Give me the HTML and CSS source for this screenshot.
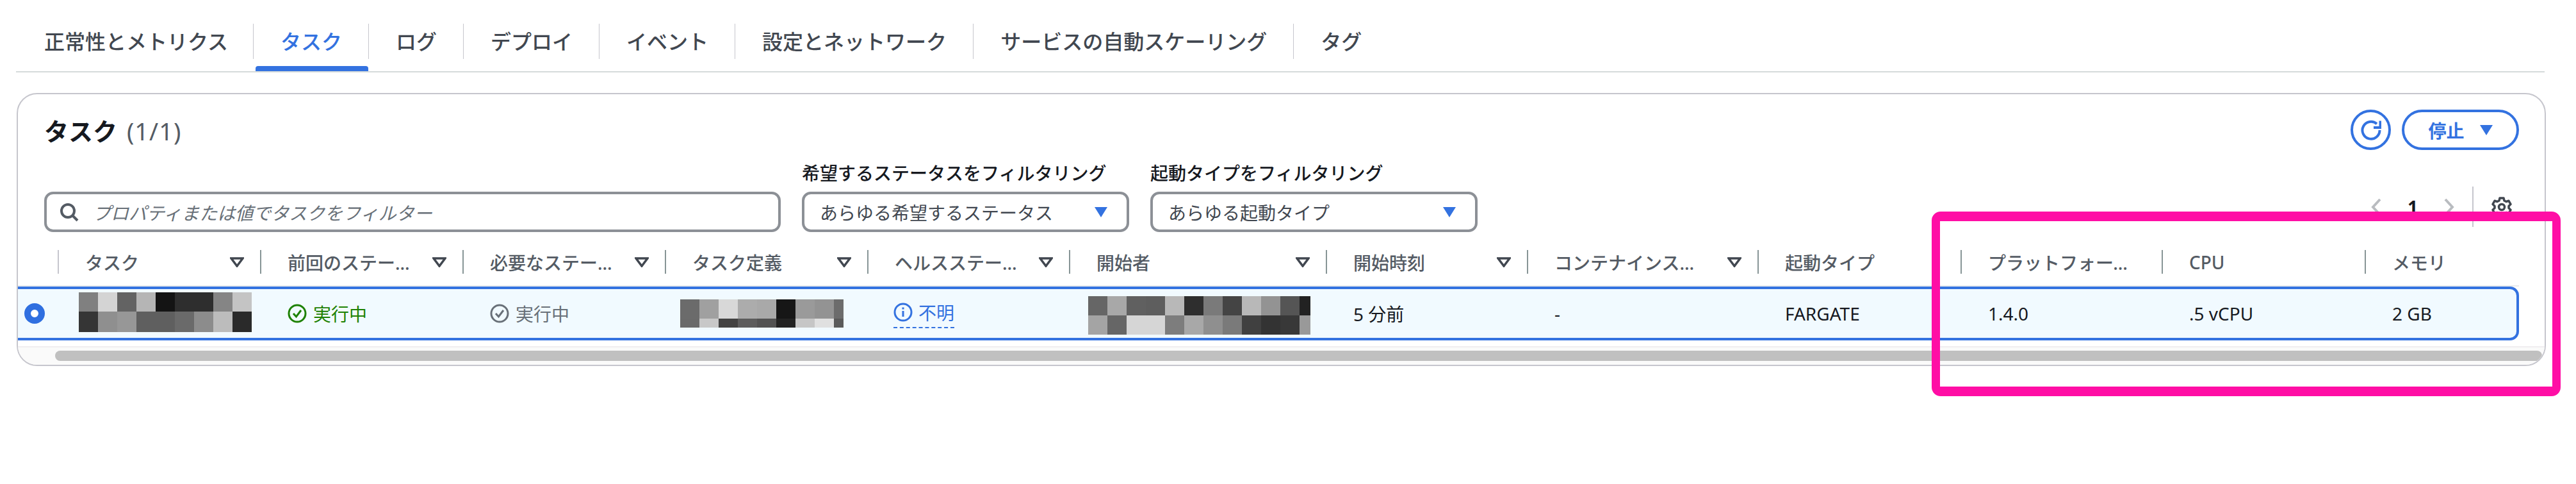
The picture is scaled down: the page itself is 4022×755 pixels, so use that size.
FILE: index.html
```html
<!DOCTYPE html>
<html lang="ja">
<head>
    <meta charset="UTF-8">
    <title>タスク</title>
    <link rel="stylesheet" href="styles.css">
</head>
<body>

    <nav class="tabs">
        <a class="tab">正常性とメトリクス</a>
        <a class="tab tab-active">タスク</a>
        <a class="tab">ログ</a>
        <a class="tab">デプロイ</a>
        <a class="tab">イベント</a>
        <a class="tab">設定とネットワーク</a>
        <a class="tab">サービスの自動スケーリング</a>
        <a class="tab">タグ</a>
    </nav>

    <section class="card">

        <div class="card-head">
            <h2 class="card-title">タスク <span class="count">(1/1)</span></h2>
            <div class="actions">
                <button class="btn-round">
                    <svg width="32" height="32" viewBox="0 0 32 32" fill="none" stroke="#3372e0" stroke-width="4"><path d="M25 6.2A13.5 13.5 0 1 0 29.5 16"/><path d="M30.5 1.5V12H20"/></svg>
                </button>
                <button class="btn-stop">停止 <svg class="caret" viewBox="0 0 20 16"><path d="M0 0H20L10 16Z"/></svg></button>
            </div>
        </div>

        <div class="filters">
            <div class="search">
                <svg width="30" height="30" viewBox="0 0 30 30" fill="none" stroke="#545b64" stroke-width="4"><circle cx="13" cy="13" r="10"/><path d="M20 20l8 8"/></svg>
                <span class="placeholder">プロパティまたは値でタスクをフィルター</span>
            </div>
            <div class="field">
                <label>希望するステータスをフィルタリング</label>
                <div class="select">あらゆる希望するステータス <svg class="caret" viewBox="0 0 20 16"><path d="M0 0H20L10 16Z"/></svg></div>
            </div>
            <div class="field">
                <label>起動タイプをフィルタリング</label>
                <div class="select">あらゆる起動タイプ <svg class="caret" viewBox="0 0 20 16"><path d="M0 0H20L10 16Z"/></svg></div>
            </div>
            <div class="pager">
                <svg width="16" height="28" viewBox="0 0 16 28" fill="none" stroke="#b9bcc0" stroke-width="4"><path d="M14 2L3 14l11 12"/></svg>
                <span class="page-num">1</span>
                <svg width="16" height="28" viewBox="0 0 16 28" fill="none" stroke="#b9bcc0" stroke-width="4"><path d="M2 2l11 12L2 26"/></svg>
                <span class="pager-line"></span>
                <svg width="32" height="32" viewBox="0 0 32 32" fill="none" stroke="#414750" stroke-width="3.5" stroke-linejoin="round"><path d="M13 2h6l1 4 3 1.5 4-1.2 3 5.2-3 2.9v3.2l3 2.9-3 5.2-4-1.2-3 1.5-1 4h-6l-1-4-3-1.5-4 1.2-3-5.2 3-2.9v-3.2l-3-2.9 3-5.2 4 1.2 3-1.5z"/><circle cx="16" cy="16" r="4.5"/></svg>
            </div>
        </div>

        <div class="cols thead">
            <div></div>
            <div class="th th-first"><span class="th-label">タスク</span><svg class="sort" viewBox="0 0 22 16"><path d="M2 2H20L11 14Z"/></svg></div>
            <div class="th"><span class="th-label">前回のステータス</span><svg class="sort" viewBox="0 0 22 16"><path d="M2 2H20L11 14Z"/></svg></div>
            <div class="th"><span class="th-label">必要なステータス</span><svg class="sort" viewBox="0 0 22 16"><path d="M2 2H20L11 14Z"/></svg></div>
            <div class="th"><span class="th-label">タスク定義</span><svg class="sort" viewBox="0 0 22 16"><path d="M2 2H20L11 14Z"/></svg></div>
            <div class="th"><span class="th-label">ヘルスステータス</span><svg class="sort" viewBox="0 0 22 16"><path d="M2 2H20L11 14Z"/></svg></div>
            <div class="th"><span class="th-label">開始者</span><svg class="sort" viewBox="0 0 22 16"><path d="M2 2H20L11 14Z"/></svg></div>
            <div class="th"><span class="th-label">開始時刻</span><svg class="sort" viewBox="0 0 22 16"><path d="M2 2H20L11 14Z"/></svg></div>
            <div class="th"><span class="th-label">コンテナインスタンス</span><svg class="sort" viewBox="0 0 22 16"><path d="M2 2H20L11 14Z"/></svg></div>
            <div class="th th-plain"><span class="th-label">起動タイプ</span></div>
            <div class="th th-plain"><span class="th-label">プラットフォームのバージョン</span></div>
            <div class="th th-plain"><span class="th-label">CPU</span></div>
            <div class="th th-plain"><span class="th-label">メモリ</span></div>
        </div>

        <div class="cols row">
            <div class="td-radio"><span class="radio"></span></div>
            <div class="td">
                <svg class="mosaic mosaic-task" width="270" height="62" viewBox="0 0 270 62" shape-rendering="crispEdges">
                    <rect x="0" width="30" height="30" fill="#808080"/><rect x="30" width="30" height="30" fill="#d4d4d4"/><rect x="60" width="30" height="30" fill="#636363"/><rect x="90" width="30" height="30" fill="#b5b5b5"/><rect x="120" width="30" height="30" fill="#141414"/><rect x="150" width="30" height="30" fill="#2e2e2e"/><rect x="180" width="30" height="30" fill="#2e2e2e"/><rect x="210" width="30" height="30" fill="#858585"/><rect x="240" width="30" height="30" fill="#c4c4c4"/>
                    <rect x="0" y="30" width="30" height="32" fill="#353535"/><rect x="30" y="30" width="30" height="32" fill="#8f8f8f"/><rect x="60" y="30" width="30" height="32" fill="#979797"/><rect x="90" y="30" width="30" height="32" fill="#5f5f5f"/><rect x="120" y="30" width="30" height="32" fill="#5f5f5f"/><rect x="150" y="30" width="30" height="32" fill="#6a6a6a"/><rect x="180" y="30" width="30" height="32" fill="#8c8c8c"/><rect x="210" y="30" width="30" height="32" fill="#bcbcbc"/><rect x="240" y="30" width="30" height="32" fill="#2a2a2a"/>
                </svg>
            </div>
            <div class="td status-ok">
                <svg width="30" height="30" viewBox="0 0 30 30" fill="none" stroke="currentColor" stroke-width="3"><circle cx="15" cy="15" r="13"/><path d="M9 15l4.500 5L21 10"/></svg>
                実行中
            </div>
            <div class="td status-gray">
                <svg width="30" height="30" viewBox="0 0 30 30" fill="none" stroke="currentColor" stroke-width="3"><circle cx="15" cy="15" r="13"/><path d="M9 15l4.500 5L21 10"/></svg>
                実行中
            </div>
            <div class="td">
                <svg class="mosaic mosaic-def" width="255" height="44" viewBox="0 0 255 44" shape-rendering="crispEdges">
                    <rect x="0" width="30" height="30" fill="#6b6b6b"/><rect x="30" width="30" height="30" fill="#a0a0a0"/><rect x="60" width="30" height="30" fill="#d8d8d8"/><rect x="90" width="30" height="30" fill="#acacac"/><rect x="120" width="30" height="30" fill="#a9a9a9"/><rect x="150" width="30" height="30" fill="#161616"/><rect x="180" width="30" height="30" fill="#9a9a9a"/><rect x="210" width="30" height="30" fill="#939393"/><rect x="240" width="15" height="30" fill="#6c6c6c"/>
                    <rect x="0" y="30" width="30" height="14" fill="#6a6a6a"/><rect x="30" y="30" width="30" height="14" fill="#c8c8c8"/><rect x="60" y="30" width="30" height="14" fill="#424242"/><rect x="90" y="30" width="30" height="14" fill="#5c5c5c"/><rect x="120" y="30" width="30" height="14" fill="#525252"/><rect x="150" y="30" width="30" height="14" fill="#222222"/><rect x="180" y="30" width="30" height="14" fill="#c6c6c6"/><rect x="210" y="30" width="30" height="14" fill="#e0e0e0"/><rect x="240" y="30" width="15" height="14" fill="#5a5a5a"/>
                </svg>
            </div>
            <div class="td">
                <span class="status-info">
                    <svg width="30" height="30" viewBox="0 0 30 30" fill="none" stroke="currentColor" stroke-width="3"><circle cx="15" cy="15" r="13"/><path d="M15 13v9"/><path d="M15 7.500v3"/></svg>
                    不明
                </span>
            </div>
            <div class="td">
                <svg class="mosaic mosaic-user" width="347" height="60" viewBox="0 0 347 60" shape-rendering="crispEdges">
                    <rect x="0" width="30" height="30" fill="#666666"/><rect x="30" width="30" height="30" fill="#a8a8a8"/><rect x="60" width="30" height="30" fill="#606060"/><rect x="90" width="30" height="30" fill="#5e5e5e"/><rect x="120" width="30" height="30" fill="#b8b8b8"/><rect x="150" width="30" height="30" fill="#2e2e2e"/><rect x="180" width="30" height="30" fill="#7a7a7a"/><rect x="210" width="30" height="30" fill="#444444"/><rect x="240" width="30" height="30" fill="#b8b8b8"/><rect x="270" width="30" height="30" fill="#939393"/><rect x="300" width="30" height="30" fill="#555555"/><rect x="330" width="17" height="30" fill="#222222"/>
                    <rect x="0" y="30" width="30" height="30" fill="#a4a4a4"/><rect x="30" y="30" width="30" height="30" fill="#666666"/><rect x="60" y="30" width="30" height="30" fill="#d6d6d6"/><rect x="90" y="30" width="30" height="30" fill="#d6d6d6"/><rect x="120" y="30" width="30" height="30" fill="#7d7d7d"/><rect x="150" y="30" width="30" height="30" fill="#a8a8a8"/><rect x="180" y="30" width="30" height="30" fill="#8f8f8f"/><rect x="210" y="30" width="30" height="30" fill="#7a7a7a"/><rect x="240" y="30" width="30" height="30" fill="#404040"/><rect x="270" y="30" width="30" height="30" fill="#333333"/><rect x="300" y="30" width="30" height="30" fill="#383838"/><rect x="330" y="30" width="17" height="30" fill="#999999"/>
                </svg>
            </div>
            <div class="td">5 分前</div>
            <div class="td">-</div>
            <div class="td">FARGATE</div>
            <div class="td">1.4.0</div>
            <div class="td">.5 vCPU</div>
            <div class="td">2 GB</div>
        </div>

        <div class="scroll-track">
            <div class="scroll-thumb"></div>
        </div>

    </section>

    <!-- annotation drawn on the screenshot -->
    <div class="highlight"></div>

</body>
</html>
```

FILE: styles.css
```css
* {
    box-sizing: border-box;
    font-family: "Noto Sans", "Noto Sans CJK JP", sans-serif;
}
html, body {
    margin: 0;
    background-color: white;
}
body {
    position: relative;
    height: 755px;
    overflow: hidden;
    color: #16191f;
    font-size: 28px;
}
.tabs {
    display: flex;
    margin: 0 49px 0 25px;
    padding-top: 37px;
    height: 113px;
    border-bottom: 2px solid #d5dbdb;
}
.tab {
    position: relative;
    height: 55px;
    padding: 0 41px 0 42px;
    line-height: 55px;
    font-size: 32px;
    font-weight: 500;
    color: #414750;
    border-left: 1px solid #c6c6cd;
}
.tab:first-child {
    padding: 0 39px 0 44px;
    border-left: none;
}
.tab-active {
    color: #3372e0;
}
.tab-active::after {
    content: "";
    position: absolute;
    left: 3px;
    right: 0;
    top: 66px;
    height: 8px;
    border-radius: 4px 4px 0 0;
    background-color: #3372e0;
}
.card {
    margin: 32px 47px 0 26px;
    height: 426px;
    border: 2px solid #c6c6cd;
    border-radius: 32px;
    overflow: hidden;
}
.card-head {
    display: flex;
    justify-content: space-between;
    align-items: center;
    padding: 24px 40px 0 41px;
}
.card-title {
    margin: 0;
    font-size: 38px;
    font-weight: 700;
    color: #16191f;
}
.count {
    margin-left: 5px;
    font-weight: 400;
    letter-spacing: 1px;
    color: #545b64;
}
.actions {
    display: flex;
    gap: 17px;
}
.btn-round {
    display: flex;
    align-items: center;
    justify-content: center;
    width: 63px;
    height: 63px;
    padding: 0;
    background-color: white;
    border: 4px solid #3372e0;
    border-radius: 50%;
}
.btn-stop {
    display: flex;
    align-items: center;
    justify-content: center;
    gap: 24px;
    width: 183px;
    height: 63px;
    padding: 0;
    background-color: white;
    border: 4px solid #3372e0;
    border-radius: 32px;
    color: #3372e0;
    font-size: 28px;
    font-weight: 700;
}
.caret {
    width: 20px;
    height: 16px;
    fill: #3372e0;
}
.filters {
    display: flex;
    align-items: flex-end;
    gap: 33px;
    margin-top: 18px;
    padding: 0 40px 0 41px;
}
.search {
    display: flex;
    align-items: center;
    gap: 22px;
    width: 1150px;
    height: 63px;
    padding-left: 20px;
    border: 4px solid #8c9096;
    border-radius: 14px;
}
.placeholder {
    font-style: italic;
    color: #687078;
}
.field label {
    display: block;
    margin-bottom: 11px;
    line-height: 36px;
    font-weight: 500;
    color: #16191f;
}
.select {
    display: flex;
    align-items: center;
    justify-content: space-between;
    width: 511px;
    height: 63px;
    padding: 0 30px 0 24px;
    border: 4px solid #8c9096;
    border-radius: 14px;
    color: #414750;
}
.pager {
    display: flex;
    align-items: center;
    gap: 33px;
    height: 63px;
    margin-left: auto;
    margin-bottom: 8px;
    padding-right: 11px;
}
.page-num {
    width: 32px;
    text-align: center;
    font-weight: 700;
}
.pager-line {
    width: 2px;
    height: 63px;
    margin: 0 -5px;
    background-color: #c6c6cd;
}
.cols {
    display: grid;
    grid-template-columns: 62px repeat(4, 316px) 315px 401px 314px 360px 317px 314px 317px 1fr;
    width: 3905px;
}
.thead {
    margin-top: 28px;
    padding-bottom: 18px;
    border-bottom: 2px solid #e9ebed;
}
.th {
    display: flex;
    align-items: center;
    gap: 24px;
    height: 37px;
    padding: 0 25px 0 41px;
    border-left: 2px solid #879596;
    font-weight: 500;
    color: #545b64;
}
.th-first {
    border-left-color: #c6c6cd;
}
.th-plain {
    padding-right: 40px;
}
.th-label {
    flex: 1;
    min-width: 0;
    white-space: nowrap;
    overflow: hidden;
    text-overflow: ellipsis;
}
.sort {
    flex: none;
    width: 22px;
    height: 16px;
    fill: none;
    stroke: #414750;
    stroke-width: 3.5;
}
.row {
    height: 84px;
    background-color: #f1faff;
    border: 4px solid #3372e0;
    border-left: none;
    border-radius: 0 14px 14px 0;
}
.row > div {
    display: flex;
    align-items: center;
}
.td {
    gap: 10px;
    padding-left: 43px;
    white-space: nowrap;
}
.td-radio {
    padding-left: 10px;
}
.radio {
    width: 32px;
    height: 32px;
    background-color: white;
    border: 10px solid #2f6fe0;
    border-radius: 50%;
}
.mosaic {
    flex: none;
}
.mosaic-task {
    margin: -5px 0 0 -10px;
}
.mosaic-def {
    margin-left: -19px;
}
.mosaic-user {
    margin: 5px 0 0 -13px;
}
.status-ok {
    color: #1d8102;
}
.status-gray {
    color: #687078;
}
.status-info {
    display: flex;
    align-items: center;
    gap: 9px;
    margin-left: -2px;
    padding-bottom: 3px;
    border-bottom: 2px dashed #3372e0;
    color: #3372e0;
}
.scroll-track {
    height: 29px;
    margin-top: 9px;
    padding: 5px 4px 0 58px;
    background-color: #fafafa;
    border-top: 2px solid #f0eef0;
}
.scroll-thumb {
    height: 16px;
    border-radius: 8px;
    background-color: #c0c0c0;
}
.highlight {
    position: absolute;
    left: 3016px;
    top: 330px;
    width: 982px;
    height: 288px;
    border: 15px solid #ff0ea5;
    border-left-width: 13px;
    border-right-width: 13px;
    border-radius: 14px;
}
```
